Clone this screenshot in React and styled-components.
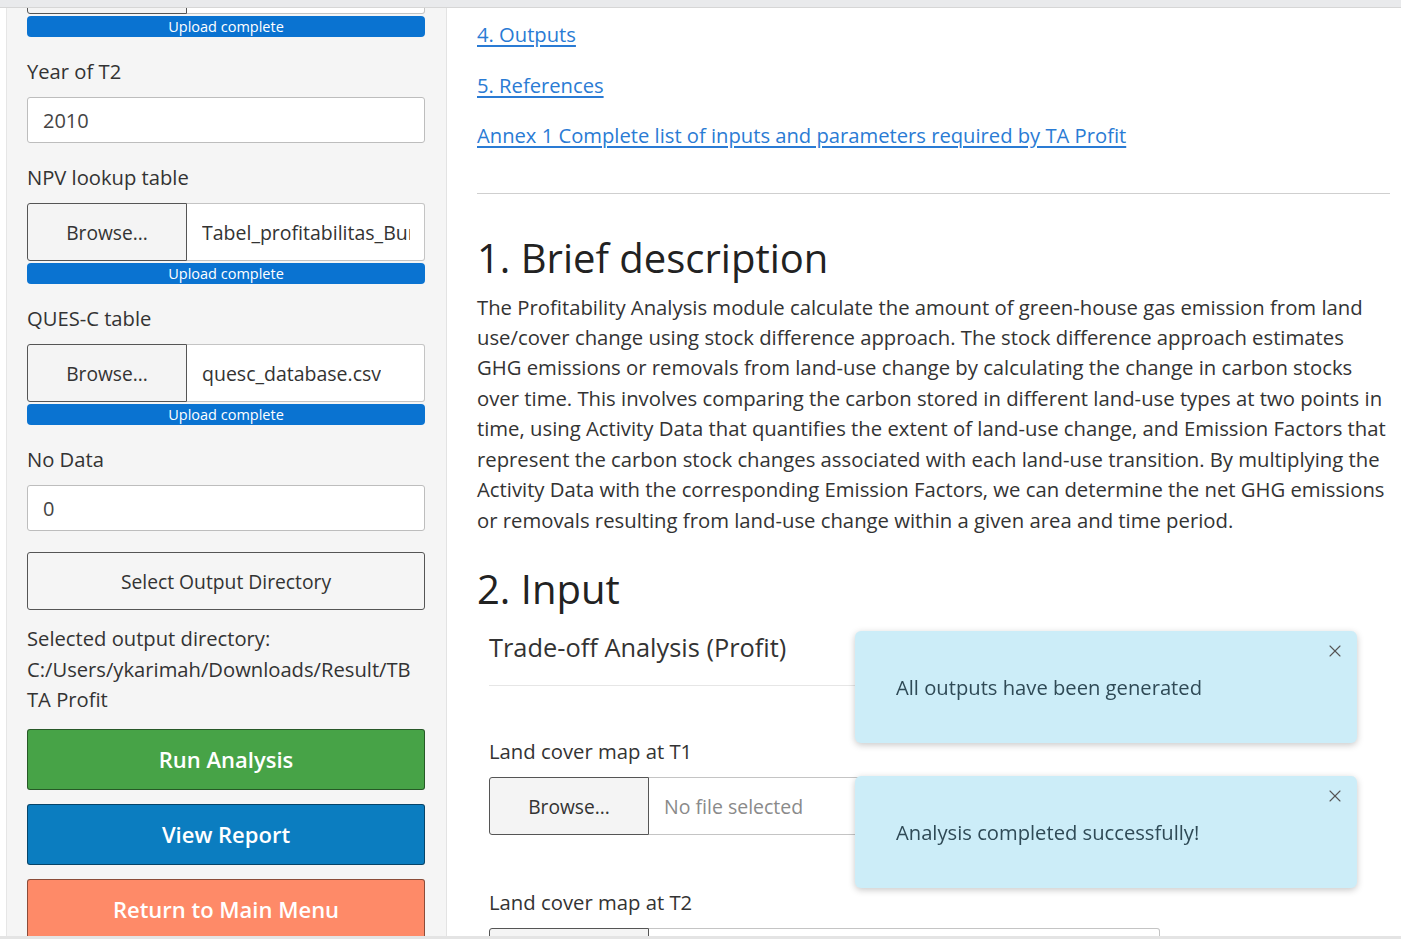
import React from 'react';
import styled, { createGlobalStyle } from 'styled-components';
import { X } from 'lucide-react';

const Global = createGlobalStyle`
  html, body { margin: 0; padding: 0; background: #fff; }
  body { font-family: "Open Sans", "DejaVu Sans", sans-serif; color: #333; }
  * { box-sizing: border-box; }
`;

const Screen = styled.div`
  height: 939px;
  overflow: hidden;
  display: flex;
  flex-direction: column;
  background: #fff;
`;

const BrowserStrip = styled.div`
  height: 8px;
  flex: none;
  background: #e9eaec;
  border-bottom: 1px solid #d6d6d6;
`;

const Layout = styled.div`
  flex: 1;
  display: flex;
  overflow: hidden;
  border-bottom: 3px solid #e4e4e4;
`;

const Sidebar = styled.aside`
  width: 441px;
  margin-left: 6px;
  flex: none;
  background: #f5f5f5;
  border-left: 1px solid #e6e6e6;
  border-right: 1px solid #e3e3e3;
  padding: 0 21px 0 20px;
`;

const SideInner = styled.div`
  margin-top: -52px;
`;

const Group = styled.div`
  margin-bottom: 21px;
`;

const Label = styled.div`
  font-size: 20.2px;
  line-height: 26px;
  color: #333;
  margin-bottom: 13px;
`;

const TextInput = styled.div`
  height: 46px;
  background: #fff;
  border: 1px solid #bdbdbd;
  border-radius: 3px;
  padding: 0 15px;
  display: flex;
  align-items: center;
  font-size: 20px;
  color: #444;
`;

const FileRow = styled.div`
  display: flex;
  height: 58px;
`;

const BrowseBtn = styled.div`
  width: 160px;
  flex: none;
  background: #f4f4f4;
  border: 1px solid #555;
  border-radius: 3px 0 0 3px;
  display: flex;
  align-items: center;
  justify-content: center;
  font-size: 19.2px;
  color: #333;
`;

const FileName = styled.div`
  flex: 1;
  min-width: 0;
  background: #fff;
  border: 1px solid #c4c4c4;
  border-left: none;
  border-radius: 0 3px 3px 0;
  display: flex;
  align-items: center;
  padding: 0 14px 0 15px;
  font-size: 19.5px;
  color: ${p => (p.$empty ? '#8a8a8a' : '#333')};
`;

const FileText = styled.span`
  white-space: nowrap;
  overflow: hidden;
`;

const UploadBar = styled.div`
  margin-top: 2px;
  height: 21px;
  border-radius: 4px;
  background: #0a73d1;
  color: #fff;
  font-size: 14.5px;
  line-height: 21px;
  text-align: center;
`;

const OutlineBtn = styled.div`
  height: 58px;
  border: 1px solid #555;
  border-radius: 3px;
  display: flex;
  align-items: center;
  justify-content: center;
  font-size: 19.3px;
  color: #333;
  margin-bottom: 13px;
`;

const DirText = styled.div`
  font-size: 20.2px;
  line-height: 30.5px;
  color: #333;
  margin-bottom: 14px;
  white-space: nowrap;
`;

const ActionBtn = styled.div`
  height: 61px;
  margin-bottom: 14px;
  border: 1px solid rgba(0, 0, 0, 0.45);
  border-radius: 3px;
  background: ${p => p.$bg};
  color: #fff;
  display: flex;
  align-items: center;
  justify-content: center;
  font-size: 22px;
  font-weight: 600;
`;

const Main = styled.main`
  flex: 1;
  padding: 0 11px 0 30px;
`;

const LinkLine = styled.p`
  margin: 0 0 20px;
  font-size: 20.2px;
  line-height: 30.5px;
  &:first-child { margin-top: 11px; }
`;

const Link = styled.a`
  color: #2a7bd4;
  text-decoration: underline;
  text-underline-offset: 3px;
`;

const Rule = styled.hr`
  border: none;
  border-top: 1px solid ${p => p.$color || '#cfcfcf'};
  margin: ${p => p.$margin || '0'};
  width: 100%;
`;

const Heading = styled.h1`
  font-size: 40px;
  font-weight: 400;
  line-height: 52px;
  color: #222;
  margin: ${p => p.$margin};
`;

const Para = styled.p`
  font-size: 20.3px;
  line-height: 30.45px;
  color: #333;
  margin: 0;
`;

const Panel = styled.section`
  margin-left: 12px;
  width: 671px;
`;

const PanelTitle = styled.div`
  font-size: 25.4px;
  line-height: 34px;
  color: #333;
  margin-top: 15px;
`;

const PanelLabel = styled.div`
  font-size: 20.3px;
  line-height: 26px;
  color: #333;
  margin: ${p => p.$top || 0}px 0 13px;
`;

const ToastStack = styled.div`
  position: fixed;
  right: 44px;
  top: 631px;
  width: 502px;
  display: flex;
  flex-direction: column;
  gap: 33px;
`;

const Toast = styled.div`
  position: relative;
  height: 112px;
  background: #ccedf8;
  border-radius: 6px;
  box-shadow: 0 2px 7px rgba(0, 0, 0, 0.22);
  display: flex;
  align-items: center;
  padding-left: 41px;
  font-size: 20.2px;
  color: #2f4a56;
`;

const Close = styled.span`
  position: absolute;
  top: 10px;
  right: 12px;
  color: #555;
  display: flex;
`;

function FileInput({ name, empty }) {
  return (
    <FileRow>
      <BrowseBtn>Browse...</BrowseBtn>
      <FileName $empty={empty}><FileText>{name}</FileText></FileName>
    </FileRow>
  );
}

export default function App() {
  return (
    <>
      <Global />
      <Screen>
        <BrowserStrip />
        <Layout>
          <Sidebar>
            <SideInner>
              <Group>
                <FileInput name="lc_2005.tif" />
                <UploadBar>Upload complete</UploadBar>
              </Group>
              <Group>
                <Label>Year of T2</Label>
                <TextInput>2010</TextInput>
              </Group>
              <Group>
                <Label>NPV lookup table</Label>
                <FileInput name="Tabel_profitabilitas_Bungo.csv" />
                <UploadBar>Upload complete</UploadBar>
              </Group>
              <Group>
                <Label>QUES-C table</Label>
                <FileInput name="quesc_database.csv" />
                <UploadBar>Upload complete</UploadBar>
              </Group>
              <Group>
                <Label>No Data</Label>
                <TextInput>0</TextInput>
              </Group>
              <OutlineBtn>Select Output Directory</OutlineBtn>
              <DirText>
                Selected output directory:<br />
                C:/Users/ykarimah/Downloads/Result/TB<br />
                TA Profit
              </DirText>
              <ActionBtn $bg="#47a347">Run Analysis</ActionBtn>
              <ActionBtn $bg="#0b7dc0">View Report</ActionBtn>
              <ActionBtn $bg="#fe8a68">Return to Main Menu</ActionBtn>
            </SideInner>
          </Sidebar>
          <Main>
            <LinkLine><Link>4. Outputs</Link></LinkLine>
            <LinkLine><Link>5. References</Link></LinkLine>
            <LinkLine><Link>Annex 1 Complete list of inputs and parameters required by TA Profit</Link></LinkLine>
            <Rule $margin="42px 0 0" />
            <Heading $margin="38px 0 8px">1. Brief description</Heading>
            <Para>
              The Profitability Analysis module calculate the amount of green-house gas emission from land
              use/cover change using stock difference approach. The stock difference approach estimates
              GHG emissions or removals from land-use change by calculating the change in carbon stocks
              over time. This involves comparing the carbon stored in different land-use types at two points in
              time, using Activity Data that quantifies the extent of land-use change, and Emission Factors that
              represent the carbon stock changes associated with each land-use transition. By multiplying the
              Activity Data with the corresponding Emission Factors, we can determine the net GHG emissions
              or removals resulting from land-use change within a given area and time period.
            </Para>
            <Heading $margin="28px 0 0">2. Input</Heading>
            <Panel>
              <PanelTitle>Trade-off Analysis (Profit)</PanelTitle>
              <Rule $color="#e6e6e6" $margin="21px 0 52px" />
              <PanelLabel>Land cover map at T1</PanelLabel>
              <FileInput name="No file selected" empty />
              <PanelLabel $top={54}>Land cover map at T2</PanelLabel>
              <FileInput name="" empty />
            </Panel>
          </Main>
        </Layout>
        <ToastStack>
          <Toast>
            All outputs have been generated
            <Close><X size={20} strokeWidth={1.3} /></Close>
          </Toast>
          <Toast>
            Analysis completed successfully!
            <Close><X size={20} strokeWidth={1.3} /></Close>
          </Toast>
        </ToastStack>
      </Screen>
    </>
  );
}
